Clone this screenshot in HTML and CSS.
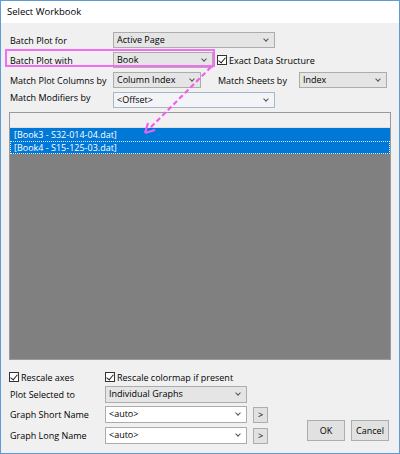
FILE: index.html
```html
<!DOCTYPE html>
<html lang="en">

<head>
    <meta charset="UTF-8">
    <title>Select Workbook</title>
    <link rel="stylesheet" href="styles.css">
</head>

<body>

    <div class="window">
        <div class="titlebar">Select Workbook</div>

        <div class="content">
            <div class="row">
                <span class="label">Batch Plot for</span>
                <div class="select w-wide">Active Page<span class="chev"></span></div>
            </div>

            <div class="row">
                <span class="label">Batch Plot with</span>
                <div class="select w-book">Book<span class="chev"></span></div>
                <label class="check gap-left"><span class="box checked"></span>Exact Data Structure</label>
            </div>

            <div class="row">
                <span class="label">Match Plot Columns by</span>
                <div class="select w-col">Column Index<span class="chev"></span></div>
                <span class="label sheets">Match Sheets by</span>
                <div class="select w-col">Index<span class="chev"></span></div>
            </div>

            <div class="row">
                <span class="label up">Match Modifiers by</span>
                <div class="select light w-wide">&lt;Offset&gt;<span class="chev"></span></div>
            </div>

            <div class="listbox">
                <div class="list-head"></div>
                <div class="list-item">[Book3 - S32-014-04.dat]</div>
                <div class="list-item focused">[Book4 - S15-125-03.dat]</div>
            </div>

            <div class="bottom">
                <div class="options">
                    <div class="check-row">
                        <label class="check rescale"><span class="box checked"></span>Rescale axes</label>
                        <label class="check"><span class="box checked"></span>Rescale colormap if present</label>
                    </div>
                    <div class="row small first">
                        <span class="label short">Plot Selected to</span>
                        <div class="select w-name">Individual Graphs<span class="chev"></span></div>
                    </div>
                    <div class="row small">
                        <span class="label short">Graph Short Name</span>
                        <div class="select white w-name">&lt;auto&gt;<span class="chev"></span></div>
                        <button class="more">&gt;</button>
                    </div>
                    <div class="row small">
                        <span class="label short">Graph Long Name</span>
                        <div class="select white w-name">&lt;auto&gt;<span class="chev"></span></div>
                        <button class="more">&gt;</button>
                    </div>
                </div>
                <div class="actions">
                    <button class="btn">OK</button>
                    <button class="btn">Cancel</button>
                </div>
            </div>
        </div>

        <!-- highlight drawn over the dialog -->
        <div class="mark"></div>
        <svg class="arrow" width="400" height="454" viewBox="0 0 400 454">
            <line x1="211" y1="67" x2="149" y2="129" stroke="#f060f0" stroke-width="2.2" stroke-dasharray="5 3" />
            <path d="M145 133 L148 123 M145 133 L155 130" stroke="#f060f0" stroke-width="2.2" fill="none" />
        </svg>
    </div>

</body>

</html>
```

FILE: styles.css
```css
* {
    margin: 0;
    padding: 0;
    box-sizing: border-box;
}

body {
    font-family: 'Open Sans', sans-serif;
    font-size: 9px;
    color: #000;
    background: #fff;
}

.window {
    position: relative;
    width: 400px;
    height: 454px;
    border: 1px solid #5c9dd8;
    background: #f0f0f0;
    overflow: hidden;
}

.titlebar {
    height: 22px;
    background: #fff;
    padding-left: 6px;
    line-height: 22px;
    font-size: 9.5px;
}

.content {
    padding: 9px 8px 0 8px;
}

.row {
    display: flex;
    align-items: center;
    height: 16px;
    margin-bottom: 4px;
}

.label {
    width: 104px;
    padding-left: 1px;
    flex-shrink: 0;
}

.label.up {
    margin-top: -5px;
}

.label.sheets {
    width: 82px;
    margin-left: 16px;
}

.label.short {
    width: 96px;
}

.select {
    position: relative;
    height: 16px;
    line-height: 14px;
    padding-left: 3px;
    background: #e5e5e5;
    border: 1px solid #acacac;
}

.select.light {
    background: #f2f4f7;
    border-color: #a9b6c5;
}

.select.white {
    background: #fff;
}

.chev {
    position: absolute;
    right: 6px;
    top: 4px;
    width: 4px;
    height: 4px;
    border-right: 1px solid #555;
    border-bottom: 1px solid #555;
    transform: rotate(45deg);
}

.w-wide {
    width: 162px;
}

.w-book {
    width: 100px;
}

.w-col {
    width: 88px;
}

.w-name {
    width: 142px;
}

.check {
    display: flex;
    align-items: center;
    gap: 2px;
}

.gap-left {
    margin-left: 4px;
}

.box {
    position: relative;
    width: 10px;
    height: 10px;
    border: 1px solid #333;
    background: #fff;
}

.box.checked::after {
    content: "";
    position: absolute;
    left: 2px;
    top: 0;
    width: 3px;
    height: 6px;
    border-right: 1px solid #222;
    border-bottom: 1px solid #222;
    transform: rotate(40deg);
}

.listbox {
    height: 248px;
    margin-top: 1px;
    border: 1px solid #9a9a9a;
    background: #808080;
}

.list-head {
    height: 15px;
    background: #f0f0f0;
    border-bottom: 1px solid #e0e0e0;
}

.list-item {
    height: 13px;
    line-height: 12px;
    padding-left: 3px;
    background: #0078d7;
    color: #fff;
    border: 1px solid #0078d7;
}

.list-item.focused {
    border: 1px dotted #dfeaf6;
}

.bottom {
    display: flex;
    justify-content: space-between;
    margin-top: 11px;
}

.check-row {
    display: flex;
    height: 12px;
    align-items: center;
    margin-bottom: 3px;
}

.rescale {
    width: 96px;
}

.row.small {
    margin-bottom: 4px;
    height: 17px;
}

.row.small.first {
    margin-bottom: 3px;
}

.row.small .select {
    height: 17px;
}

.more {
    width: 15px;
    height: 16px;
    margin-left: 6px;
    background: #e1e1e1;
    border: 1px solid #adadad;
    font-family: 'Open Sans', sans-serif;
    font-size: 9px;
}

.actions {
    display: flex;
    gap: 6px;
    align-self: flex-end;
    margin-bottom: 7px;
    margin-right: 2px;
}

.btn {
    width: 38px;
    height: 21px;
    background: #e1e1e1;
    border: 1px solid #adadad;
    font-family: 'Open Sans', sans-serif;
    font-size: 9px;
}

.mark {
    position: absolute;
    left: 4px;
    top: 48px;
    width: 210px;
    height: 18px;
    border: 2px solid #f36ef3;
}

.arrow {
    position: absolute;
    left: -1px;
    top: -1px;
}
```
